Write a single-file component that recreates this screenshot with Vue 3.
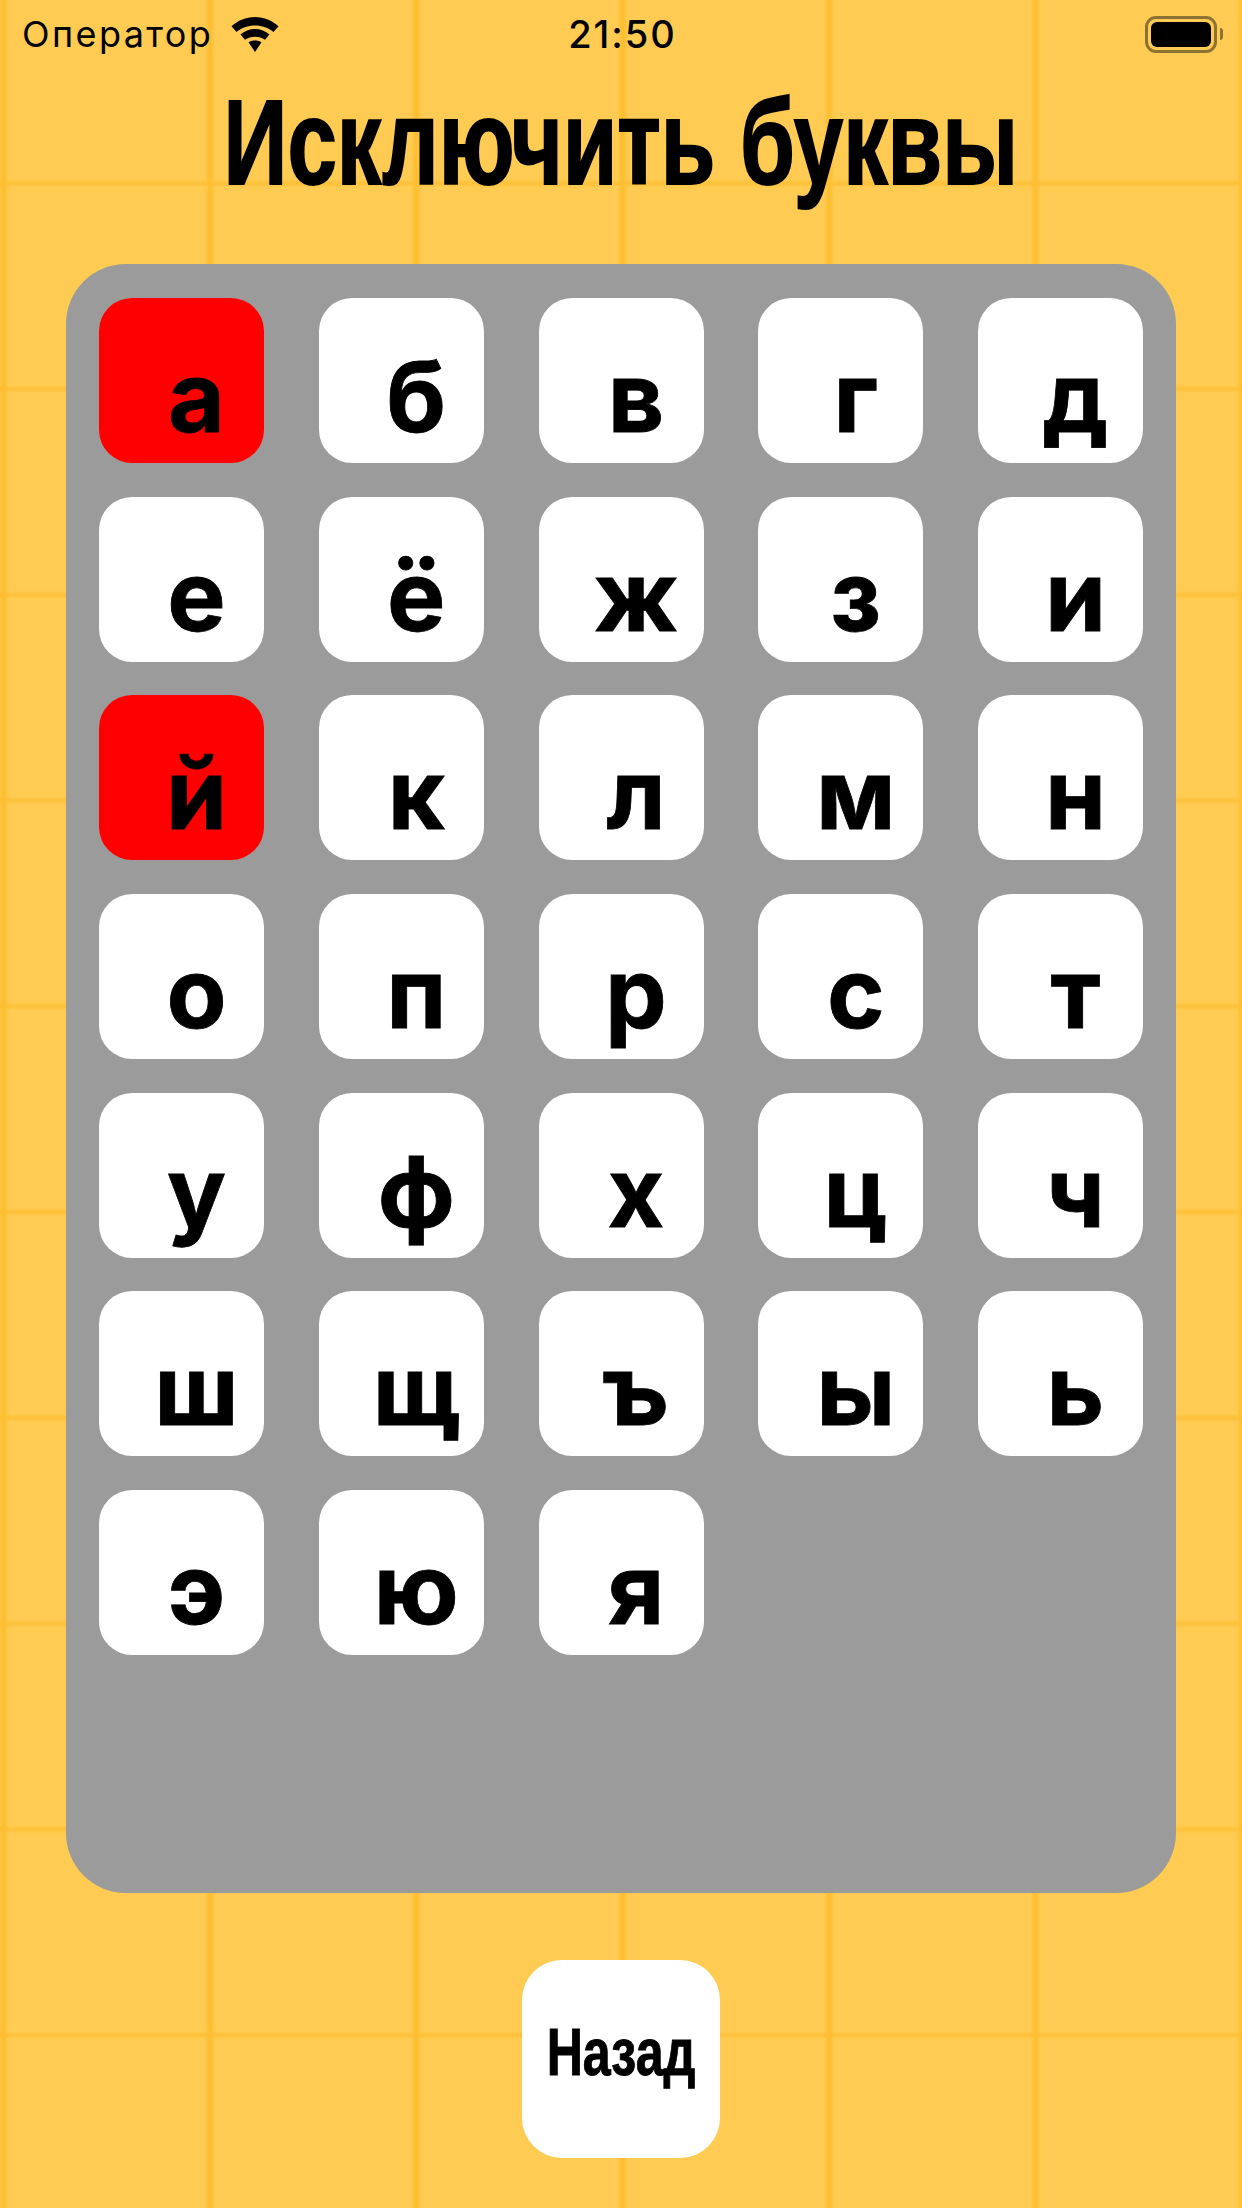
<script setup>
const letters = 'абвгдеёжзийклмнопрстуфхцчшщъыьэюя'.split('')
const excluded = new Set(['а', 'й'])
</script>

<template>
  <div class="screen">
    <div class="status">
      <div class="status-left">
        <span class="carrier">Оператор</span>
        <svg class="wifi" viewBox="0 0 48 35" width="48" height="35">
          <path d="M24 0C15 0 6.700 3.500 0.500 9.300L5.500 15C10.500 10.800 17 8.500 24 8.500S37.500 10.800 42.500 15L47.500 9.300C41.300 3.500 33 0 24 0Z" />
          <path d="M24 12C18.500 12 13.500 14 9.500 17.500L14 22.800C16.800 20.700 20.200 19.800 24 19.800S31.200 20.700 34 22.800L38.500 17.500C34.500 14 29.500 12 24 12Z" />
          <path d="M24 23.500C21.500 23.500 19.200 24.100 17.500 25.300L24 35L30.500 25.300C28.800 24.100 26.500 23.500 24 23.500Z" />
        </svg>
      </div>
      <span class="time">21:50</span>
      <div class="battery">
        <div class="battery-body"><div class="battery-level"></div></div>
        <div class="battery-cap"></div>
      </div>
    </div>

    <h1 class="title"><span>Исключить буквы</span></h1>

    <div class="panel">
      <div
        v-for="l in letters"
        :key="l"
        class="cell"
        :class="{ excluded: excluded.has(l) }"
      >{{ l }}</div>
    </div>

    <div class="footer">
      <button class="back"><span>Назад</span></button>
    </div>
  </div>
</template>

<style scoped>
.screen {
  width: 1242px;
  height: 2208px;
  overflow: hidden;
  box-sizing: border-box;
  background-color: #ffcb52;
  background-image:
    linear-gradient(90deg, transparent 0, #fdbe30 4px, #fdbe30 6px, transparent 10px),
    linear-gradient(180deg, transparent 0, #fdc23c 3px, #fdc23c 5px, transparent 8px);
  background-size: 206.4px 100%, 100% 205.75px;
  background-position: -1.500px 0, 0 -26.500px;
  font-family: Inter, "Liberation Sans", sans-serif;
  color: #000;
}
.status {
  height: 68px;
  padding: 0 19px 0 22px;
  display: grid;
  grid-template-columns: 1fr auto 1fr;
  align-items: center;
}
.status-left {
  display: flex;
  align-items: center;
  gap: 18px;
}
.carrier {
  font-size: 36px;
  letter-spacing: 2.400px;
  line-height: 1;
}
.wifi {
  fill: #000;
}
.time {
  font-size: 38px;
  font-weight: 500;
  letter-spacing: 2px;
  line-height: 1;
}
.battery {
  justify-self: end;
  display: flex;
  align-items: center;
  gap: 3px;
}
.battery-body {
  box-sizing: border-box;
  width: 72px;
  height: 37px;
  border: 3px solid #8c7233;
  border-radius: 11px;
  padding: 3px;
}
.battery-level {
  width: 100%;
  height: 100%;
  background: #000;
  border-radius: 6px;
}
.battery-cap {
  width: 3px;
  height: 12px;
  background: #8c7233;
  border-radius: 0 3px 3px 0;
}
.title {
  box-sizing: border-box;
  margin: 0;
  height: 196px;
  padding-top: 8px;
  display: flex;
  justify-content: center;
  font-family: "Liberation Sans", sans-serif;
  font-size: 120px;
  font-weight: 700;
  line-height: 132px;
}
.title span {
  display: block;
  white-space: nowrap;
  transform: scaleX(0.74);
  -webkit-text-stroke: 2px #000;
}
.panel {
  box-sizing: border-box;
  width: 1110px;
  height: 1629px;
  margin-left: 66px;
  padding: 34px 33px;
  border-radius: 60px;
  background: #9b9b9b;
  display: grid;
  grid-template-columns: repeat(5, 165px);
  grid-auto-rows: 165px;
  justify-content: space-between;
  align-content: start;
  row-gap: 33.700px;
}
.cell {
  box-sizing: border-box;
  padding: 39px 0 0 30px;
  border-radius: 33px;
  background: #fff;
  text-align: center;
  font-size: 98px;
  font-weight: 700;
  line-height: 119px;
  -webkit-text-stroke: 0.8px #000;
}
.cell.excluded {
  background: #ff0000;
}
.footer {
  display: flex;
  justify-content: center;
  padding-top: 67px;
}
.back {
  width: 198px;
  height: 198px;
  padding: 0 0 14px;
  border: none;
  border-radius: 40px;
  background: #fff;
  color: #000;
  font-family: "Liberation Sans", sans-serif;
  font-size: 66px;
  font-weight: 700;
  line-height: 1;
}
.back span {
  display: block;
  transform: scaleX(0.76);
  -webkit-text-stroke: 1px #000;
}
</style>

<style>
body {
  margin: 0;
}
</style>
